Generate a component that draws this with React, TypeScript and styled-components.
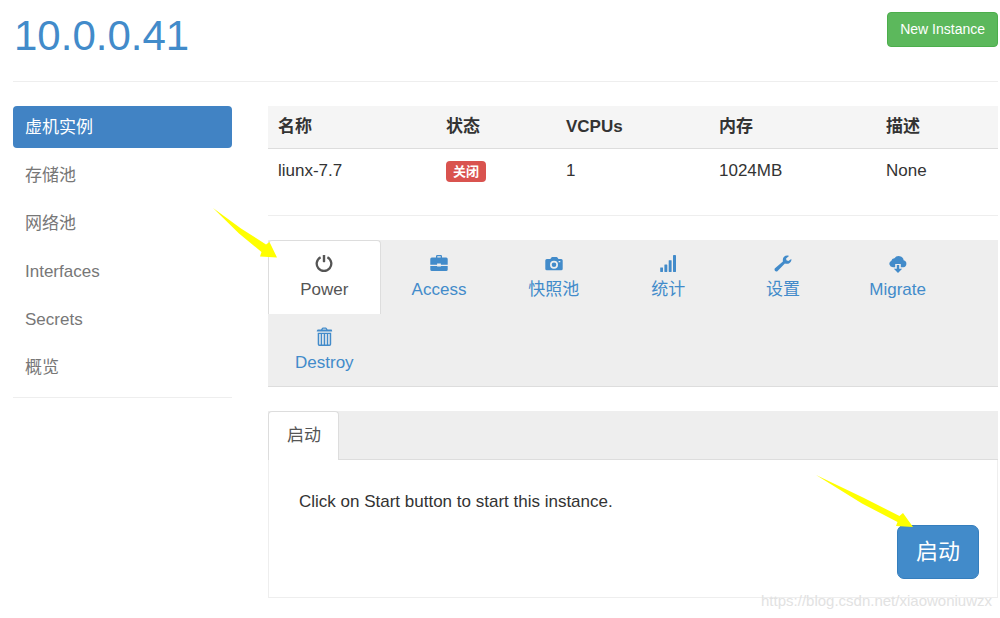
import React from "react";
import styled, { createGlobalStyle } from "styled-components";

const GlobalStyle = createGlobalStyle`
  * { box-sizing: border-box; }
  body {
    margin: 0;
    background: #fff;
    color: #333;
    font: 17px/24px "Liberation Sans", "Noto Sans CJK SC", sans-serif;
  }
  button { font-family: inherit; cursor: pointer; }
  a { text-decoration: none; }
`;

const Page = styled.div`
  position: relative;
  padding: 0 2px 20px 13px;
`;

const Header = styled.header`
  display: flex;
  justify-content: space-between;
  align-items: flex-start;
  padding: 12px 0 22px;
  border-bottom: 1px solid #eee;
  margin-bottom: 24px;
`;

const Title = styled.h1`
  margin: 0;
  padding-left: 1px;
  font-size: 42px;
  line-height: 47px;
  font-weight: 400;
  color: #428bca;
`;

const Button = styled.button<{ $kind: "success" | "primary" }>`
  color: #fff;
  background: ${(p) => (p.$kind === "success" ? "#5cb85c" : "#428bca")};
  border: 1px solid ${(p) => (p.$kind === "success" ? "#4cae4c" : "#357ebd")};
  border-radius: ${(p) => (p.$kind === "success" ? 4 : 7)}px;
  font-size: ${(p) => (p.$kind === "success" ? 14 : 22)}px;
  line-height: ${(p) => (p.$kind === "success" ? 21 : 30)}px;
  padding: ${(p) => (p.$kind === "success" ? "6px 12px" : "11px 18px")};
`;

const Columns = styled.div`
  display: grid;
  grid-template-columns: 3fr 10fr;
  gap: 36px;
  align-items: start;
`;

const SideNav = styled.nav`
  display: flex;
  flex-direction: column;
  gap: 6px;
  padding-bottom: 9px;
  border-bottom: 1px solid #eee;
`;

const SideLink = styled.a<{ $active?: boolean }>`
  padding: 10px 12px 8px;
  border-radius: 4px;
  color: ${(p) => (p.$active ? "#fff" : "#777")};
  background: ${(p) => (p.$active ? "#4183c4" : "transparent")};
`;

const Main = styled.main`
  min-width: 0;
`;

const Table = styled.table`
  width: 100%;
  table-layout: fixed;
  border-collapse: collapse;
  th, td {
    text-align: left;
    padding: 9px 10px;
  }
  td {
    padding: 10px 10px 8px;
  }
  th {
    background: #f5f5f5;
    border-bottom: 1px solid #ddd;
  }
`;

const Col = styled.col<{ $width?: number }>`
  width: ${(p) => (p.$width ? `${p.$width}px` : "auto")};
`;

const Badge = styled.span`
  display: inline-block;
  padding: 0 7px;
  border-radius: 4px;
  background: #d9534f;
  color: #fff;
  font-size: 13px;
  line-height: 21px;
  font-weight: 700;
  vertical-align: middle;
`;

const Rule = styled.hr`
  margin: 24px 0;
  border: 0;
  border-top: 1px solid #eee;
`;

const ActionTabs = styled.nav`
  display: grid;
  grid-template-columns: repeat(6, 1fr);
  column-gap: 2px;
  padding-right: 44px;
  background: #eee;
  border-bottom: 1px solid #ddd;
  margin-bottom: 24px;
`;

const ActionTab = styled.a<{ $active?: boolean }>`
  display: flex;
  flex-direction: column;
  align-items: center;
  gap: 6px;
  padding: 13px 4px 11px;
  border: 1px solid ${(p) => (p.$active ? "#ddd" : "transparent")};
  border-bottom: 0;
  border-radius: 4px 4px 0 0;
  margin-bottom: ${(p) => (p.$active ? -1 : 0)}px;
  color: ${(p) => (p.$active ? "#555" : "#428bca")};
  background: ${(p) => (p.$active ? "#fff" : "transparent")};
`;

const Icon = styled.svg`
  display: block;
  width: 18px;
  height: 19px;
  margin-bottom: -1px;
  fill: currentColor;
`;

const PanelTabs = styled.div`
  display: flex;
  background: #eee;
  border-bottom: 1px solid #ddd;
`;

const PanelTab = styled.a`
  padding: 12px 17px 12px 18px;
  margin-bottom: -1px;
  border: 1px solid #ddd;
  border-bottom: 0;
  border-radius: 4px 4px 0 0;
  color: #555;
  background: #fff;
`;

const Panel = styled.section`
  padding: 30px 18px 18px 30px;
  border: 1px solid #eee;
  border-top: 0;
`;

const PanelText = styled.p`
  margin: 0 0 11px;
`;

const PanelActions = styled.div`
  display: flex;
  justify-content: flex-end;
`;

const Arrow = styled.svg<{ $left: number; $top: number }>`
  position: absolute;
  left: ${(p) => p.$left}px;
  top: ${(p) => p.$top}px;
  width: 98px;
  height: 54px;
  fill: #ff0;
  pointer-events: none;
`;

const Watermark = styled.span`
  position: absolute;
  right: 8px;
  bottom: 8px;
  font-size: 15px;
  line-height: 18px;
  color: #e2e2e2;
  pointer-events: none;
`;

const icons: Record<string, React.ReactNode> = {
  power: (
    <>
      <path
        d="M5.6 3.200A7.300 7.300 0 1 0 12.400 3.200"
        fill="none"
        stroke="currentColor"
        strokeWidth="2.3"
      />
      <rect x="7.8" y="1" width="2.4" height="7.2" rx=".6" />
    </>
  ),
  access: (
    <path
      fillRule="evenodd"
      d="M6 3.6V2.2Q6 1 7.2 1h3.6Q12 1 12 2.2v1.4h4.2q1.5 0 1.5 1.5v5.6h-6.8V9.5H7.1v1.2H.3V5.1q0-1.5 1.5-1.5zM7.3 3.6h3.4V2.3H7.3zM.3 12h6.8v.6h3.8V12h6.8v3.5q0 1.5-1.5 1.5H1.8Q.3 17 .3 15.500z"
    />
  ),
  snapshots: (
    <path
      fillRule="evenodd"
      d="M5.300 5 6.600 3.300Q6.900 3 7.300 3h4.200q.4 0 .7.3L13.500 5h2.700q1.500 0 1.500 1.500v8.300q0 1.500-1.500 1.500H1.800Q.3 16.300.3 14.800V6.500Q.3 5 1.800 5zM9 6.700a4 4 0 1 0 0 8 4 4 0 0 0 0-8zM9 8.400a2.300 2.300 0 1 1 0 4.600 2.300 2.300 0 0 1 0-4.600zM13.600 7v1.300h1.700V7z"
    />
  ),
  stats: (
    <>
      <rect x="1.200" y="13.400" width="2.800" height="4.600" rx=".4" />
      <rect x="5.400" y="10.600" width="2.900" height="7.400" rx=".4" />
      <rect x="9.700" y="6.200" width="2.900" height="11.800" rx=".4" />
      <rect x="14" y="1" width="3" height="17" rx=".4" />
    </>
  ),
  settings: (
    <path d="M17.300 5.100 14.300 7.100 12.400 6.300 12.100 4.400 15 1.900C12.300.6 8.600 2.200 8.800 6.200L8.900 7.400 1 14.300c-1.600 1.500 1 4.300 2.600 2.600L10.900 9.400c1.500.7 3.500.5 4.700-.5 1.300-1 2-2.300 1.700-3.800z" />
  ),
  migrate: (
    <>
      <path d="M6.200 13.200H4A3.800 3.400 0 0 1 2.400 6.800 3 3 0 0 1 5.500 4.300 4.900 4.500 0 0 1 14.600 6.300 3.500 3.500 0 0 1 14.300 13.200H11.800V10H6.200z" />
      <path d="M7.800 11h2.400v3.800h3L9 19l-4.200-4.200h3z" />
    </>
  ),
  destroy: (
    <path
      fillRule="evenodd"
      d="M6 2.500 7 .9Q7.300.5 7.800.5h3q.5 0 .8.4l1 1.600h4Q17.200 3.500 17.200 4.600H1.700Q1.700 3.500 2.700 2.500zM7.500 2.500h3.700l-.6-.8H8.100zM2.700 5.700h13.500v11.600q0 1.700-1.700 1.700H4.400q-1.700 0-1.700-1.700zM4.200 7v10.500h1.500V7zM7.100 7v10.500h1.600V7zM10.200 7v10.500h1.600V7zM13.200 7v10.500h1.500V7z"
    />
  ),
};

const sideItems = ["虚机实例", "存储池", "网络池", "Interfaces", "Secrets", "概览"];

const actions = [
  { icon: "power", label: "Power" },
  { icon: "access", label: "Access" },
  { icon: "snapshots", label: "快照池" },
  { icon: "stats", label: "统计" },
  { icon: "settings", label: "设置" },
  { icon: "migrate", label: "Migrate" },
  { icon: "destroy", label: "Destroy" },
];

export default function App() {
  return (
    <Page>
      <GlobalStyle />
      <Header>
        <Title>10.0.0.41</Title>
        <Button type="button" $kind="success">New Instance</Button>
      </Header>
      <Columns>
        <SideNav>
          {sideItems.map((item, i) => (
            <SideLink key={item} href="#" $active={i === 0}>{item}</SideLink>
          ))}
        </SideNav>
        <Main>
          <Table>
            <colgroup>
              <Col $width={168} />
              <Col $width={120} />
              <Col $width={153} />
              <Col $width={167} />
              <Col />
            </colgroup>
            <thead>
              <tr>
                <th scope="col">名称</th>
                <th scope="col">状态</th>
                <th scope="col">VCPUs</th>
                <th scope="col">内存</th>
                <th scope="col">描述</th>
              </tr>
            </thead>
            <tbody>
              <tr>
                <td>liunx-7.7</td>
                <td><Badge>关闭</Badge></td>
                <td>1</td>
                <td>1024MB</td>
                <td>None</td>
              </tr>
            </tbody>
          </Table>
          <Rule />
          <ActionTabs>
            {actions.map(({ icon, label }, i) => (
              <ActionTab key={icon} href="#" $active={i === 0}>
                <Icon viewBox="0 0 18 19" aria-hidden="true">{icons[icon]}</Icon>
                {label}
              </ActionTab>
            ))}
          </ActionTabs>
          <PanelTabs>
            <PanelTab href="#">启动</PanelTab>
          </PanelTabs>
          <Panel>
            <PanelText>Click on Start button to start this instance.</PanelText>
            <PanelActions>
              <Button type="button" $kind="primary">启动</Button>
            </PanelActions>
          </Panel>
        </Main>
      </Columns>
      <Arrow $left={213} $top={208} viewBox="0 0 98 54" aria-hidden="true">
        <path d="M0 0 28 20.500 53 36.500 56.500 34 64 49.500 47 48.500 48.500 44 26 25.500Z" />
      </Arrow>
      <Arrow $left={816} $top={475} viewBox="0 0 98 54" aria-hidden="true">
        <path d="M0 0 47 22.500 83.500 41 87 38 97 52 80 51 81.500 47 46 28.500Z" />
      </Arrow>
      <Watermark>https://blog.csdn.net/xiaowoniuwzx</Watermark>
    </Page>
  );
}
